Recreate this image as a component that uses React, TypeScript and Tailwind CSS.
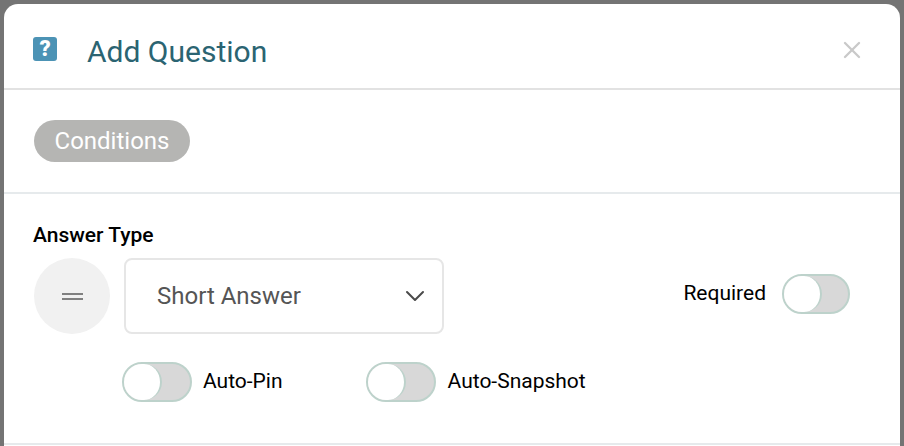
import { ChevronDown, X } from 'lucide-react';

function Toggle({ width }: { width: string }) {
  return (
    <div className={`${width} h-10 rounded-full border-2 border-[#bdd2cb] bg-[#d8d8d8] flex items-center shrink-0`}>
      <div className="w-9 h-9 rounded-full bg-white border-r-2 border-[#bdd2cb] box-content -mr-px" />
    </div>
  );
}

export default function App() {
  return (
    <div className="h-[446px] w-[904px] overflow-hidden bg-[#747474] pt-1 px-1 font-['Roboto',sans-serif]">
      <div className="h-[442px] bg-white rounded-t-[14px] overflow-hidden">
        {/* Header */}
        <div className="h-[86px] border-b-2 border-[#e2e2e2] flex items-center pt-[12px] pl-[29px] pr-[34px]">
          <div className="w-6 h-6 rounded-[3px] bg-[#4c93b5] flex items-center justify-center text-white text-[22px] leading-none font-black -mt-[6px]">
            ?
          </div>
          <h2 className="ml-[30px] text-[30px] leading-none text-[#2b6472]">Add Question</h2>
          <X className="ml-auto w-[28px] h-[28px] text-[#c9c9c9] -mt-1" strokeWidth={2} />
        </div>

        {/* Conditions */}
        <div className="h-[104px] border-b-2 border-[#e6eaec] flex items-center pl-[30px]">
          <div className="h-[42px] w-[156px] rounded-full bg-[#b5b5b3] text-white text-[24px] flex items-center justify-center">
            Conditions
          </div>
        </div>

        {/* Answer type */}
        <div className="h-[251px] border-b-2 border-[#e6eaec] pl-[30px] pr-[50px] pt-[29px]">
          <div className="text-[21px] leading-[24px] font-medium text-black -ml-px">Answer Type</div>
          <div className="flex items-center mt-[11px]">
            <div className="w-[76px] h-[76px] rounded-full bg-[#f1f1f1] flex flex-col items-center justify-center gap-[3px]">
              <div className="w-[21px] h-[2px] bg-[#808080]" />
              <div className="w-[21px] h-[2px] bg-[#808080]" />
            </div>
            <div className="ml-[14px] w-[320px] h-[76px] rounded-[8px] border-2 border-[#e6e6e6] flex items-center justify-between pl-[31px] pr-[11px]">
              <span className="text-[24px] text-[#555555]">Short Answer</span>
              <ChevronDown className="w-[32px] h-[32px] text-[#4a4a4a]" strokeWidth={1.5} />
            </div>
            <div className="ml-auto flex items-center gap-4 mb-[4px]">
              <span className="text-[21px] text-black">Required</span>
              <Toggle width="w-[68px]" />
            </div>
          </div>
          <div className="flex items-center mt-[28px] ml-[88px]">
            <Toggle width="w-[70px]" />
            <span className="ml-[11px] text-[21px] text-black">Auto-Pin</span>
            <div className="ml-[83px]">
              <Toggle width="w-[70px]" />
            </div>
            <span className="ml-3 text-[21px] text-black">Auto-Snapshot</span>
          </div>
        </div>
      </div>
    </div>
  );
}
